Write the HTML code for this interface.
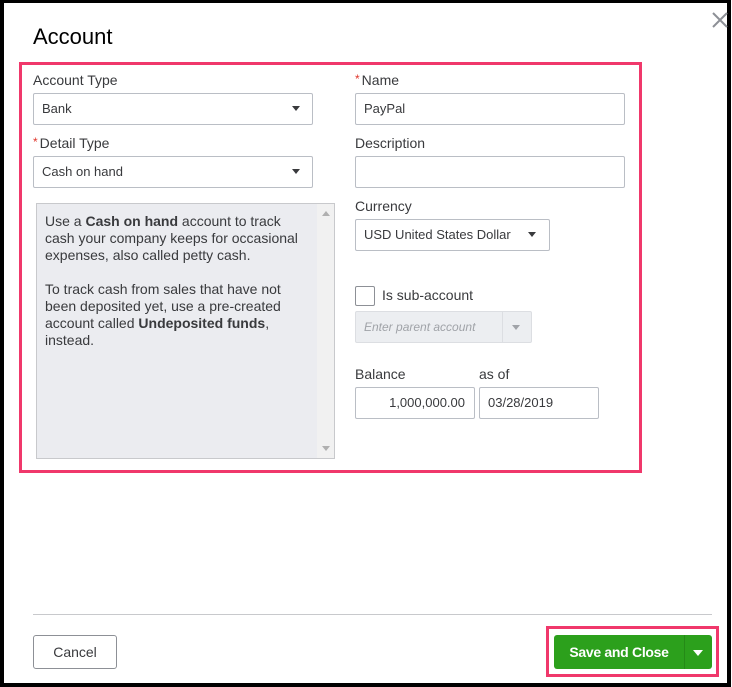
<!DOCTYPE html>
<html><head><style>
*{margin:0;padding:0;box-sizing:border-box}
body{width:732px;height:687px;background:#fff;position:relative;overflow:hidden;font-family:"Liberation Sans",sans-serif;color:#393a3d}
.a{position:absolute}
.lbl{font-size:14px;color:#393a3d}
.inp{position:absolute;border:1px solid #babec5;border-radius:2px;background:#fff;font-size:13px;color:#393a3d;padding-left:8px;line-height:30px}
.tri{position:absolute;width:0;height:0;border-left:5px solid transparent;border-right:5px solid transparent;border-top:6px solid #393a3d}
.req{color:#e0362c;font-size:12px;margin-right:2px;vertical-align:2px}
</style></head><body>
<div class="a" style="left:0;top:0;width:731px;height:3px;background:#000"></div>
<div class="a" style="left:0;top:0;width:4px;height:687px;background:#000"></div>
<div class="a" style="left:727px;top:0;width:4px;height:687px;background:#000"></div>
<div class="a" style="left:0;top:683px;width:731px;height:4px;background:#000"></div>

<div class="a" style="left:33px;top:24px;font-size:22px;color:#000">Account</div>
<svg class="a" style="left:712px;top:12px" width="16" height="16"><path d="M1 1L15 15M15 1L1 15" stroke="#8d9096" stroke-width="2"/></svg>

<div class="a" style="left:19px;top:62px;width:623px;height:411px;border:3px solid #f0386b"></div>

<div class="a lbl" style="left:33px;top:72px">Account Type</div>
<div class="inp" style="left:33px;top:93px;width:280px;height:32px">Bank</div>
<div class="tri" style="left:292px;top:106px;border-left-width:4.5px;border-right-width:4.5px;border-top-width:5px"></div>
<div class="a lbl" style="left:33px;top:135px"><span class="req">*</span>Detail Type</div>
<div class="inp" style="left:33px;top:156px;width:280px;height:32px">Cash on hand</div>
<div class="tri" style="left:292px;top:169px;border-left-width:4.5px;border-right-width:4.5px;border-top-width:5px"></div>

<div class="a" style="left:36px;top:203px;width:299px;height:256px;border:1px solid #c8c9cc;background:#ebecf0">
 <div class="a" style="right:0;top:0;width:17px;height:254px;background:#f1f1f1"></div>
 <div class="a" style="right:4px;top:7px;width:0;height:0;border-left:4px solid transparent;border-right:4px solid transparent;border-bottom:5px solid #b0b0b0"></div>
 <div class="a" style="right:4px;bottom:7px;width:0;height:0;border-left:4px solid transparent;border-right:4px solid transparent;border-top:5px solid #b0b0b0"></div>
 <div class="a" style="left:8px;top:9px;width:258px;font-size:14px;line-height:17px;color:#393a3d">Use a <b>Cash on hand</b> account to track cash your company keeps for occasional expenses, also called petty cash.<br><br>To track cash from sales that have not been deposited yet, use a pre-created account called <b>Undeposited funds</b>, instead.</div>
</div>

<div class="a lbl" style="left:355px;top:72px"><span class="req">*</span>Name</div>
<div class="inp" style="left:355px;top:93px;width:270px;height:32px">PayPal</div>
<div class="a lbl" style="left:355px;top:135px">Description</div>
<div class="inp" style="left:355px;top:156px;width:270px;height:32px"></div>
<div class="a lbl" style="left:355px;top:198px">Currency</div>
<div class="inp" style="left:355px;top:219px;width:195px;height:32px">USD United States Dollar</div>
<div class="tri" style="left:528px;top:232px;border-left-width:4.5px;border-right-width:4.5px;border-top-width:5px"></div>

<div class="a" style="left:355px;top:286px;width:20px;height:20px;border:1px solid #8d9096;border-radius:2px"></div>
<div class="a lbl" style="left:382px;top:287px">Is sub-account</div>
<div class="inp" style="left:355px;top:311px;width:177px;height:32px;background:#eceef1;border-color:#dcdee2;color:#a0a3a8;font-style:italic;font-size:12px">Enter parent account</div>
<div class="a" style="left:502px;top:312px;width:1px;height:30px;background:#dcdee2"></div>
<div class="tri" style="left:512px;top:325px;border-top-color:#a0a3a8;border-left-width:4px;border-right-width:4px;border-top-width:5px"></div>

<div class="a lbl" style="left:355px;top:366px">Balance</div>
<div class="a lbl" style="left:479px;top:366px">as of</div>
<div class="inp" style="left:355px;top:387px;width:120px;height:32px;text-align:right;padding-right:9px">1,000,000.00</div>
<div class="inp" style="left:479px;top:387px;width:120px;height:32px">03/28/2019</div>

<div class="a" style="left:33px;top:614px;width:679px;height:1px;background:#c8c9cc"></div>
<div class="a" style="left:33px;top:635px;width:84px;height:34px;border:1px solid #8d9096;border-radius:3px;font-size:14px;line-height:32px;text-align:center;color:#393a3d">Cancel</div>

<div class="a" style="left:546px;top:626px;width:173px;height:51px;border:3px solid #f0386b"></div>
<div class="a" style="left:554px;top:635px;width:158px;height:34px;background:#2ca01c;border-radius:3px"></div>
<div class="a" style="left:554px;top:635px;width:130px;height:34px;color:#fff;font-weight:bold;font-size:14px;line-height:34px;text-align:center;letter-spacing:-0.3px">Save and Close</div>
<div class="a" style="left:684px;top:635px;width:1px;height:34px;background:#258a17"></div>
<div class="tri" style="left:693px;top:650px;border-top-color:#fff"></div>
</body></html>
